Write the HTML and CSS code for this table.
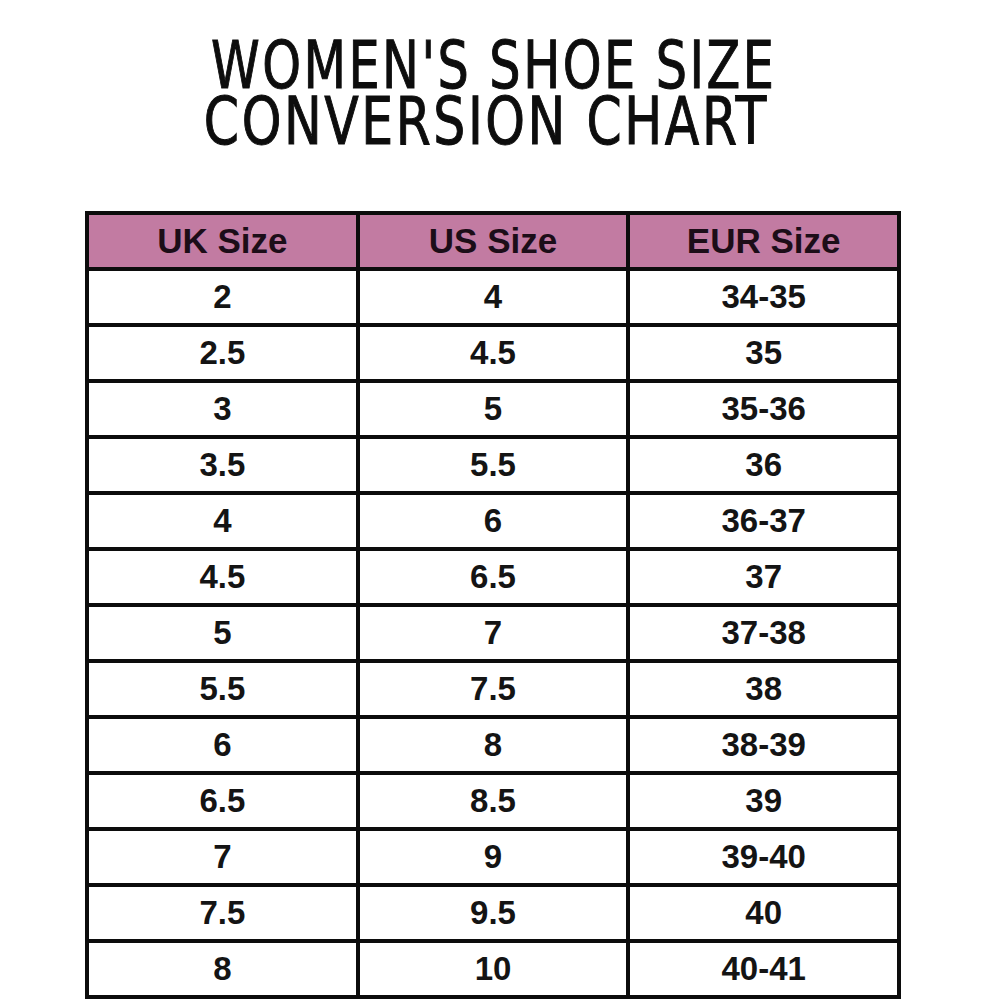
FILE: index.html
```html
<!DOCTYPE html>
<html>
<head>
<meta charset="utf-8">
<link rel="stylesheet" href="styles.css">
</head>
<body>
<div class="page">
  <h1 class="title"><span class="line">WOMEN'S SHOE SIZE</span><span class="line line2">CONVERSION CHART</span></h1>
  <table class="chart">
    <thead>
      <tr><th>UK Size</th><th>US Size</th><th>EUR Size</th></tr>
    </thead>
    <tbody>
      <tr><td>2</td><td>4</td><td>34-35</td></tr>
      <tr><td>2.5</td><td>4.5</td><td>35</td></tr>
      <tr><td>3</td><td>5</td><td>35-36</td></tr>
      <tr><td>3.5</td><td>5.5</td><td>36</td></tr>
      <tr><td>4</td><td>6</td><td>36-37</td></tr>
      <tr><td>4.5</td><td>6.5</td><td>37</td></tr>
      <tr><td>5</td><td>7</td><td>37-38</td></tr>
      <tr><td>5.5</td><td>7.5</td><td>38</td></tr>
      <tr><td>6</td><td>8</td><td>38-39</td></tr>
      <tr><td>6.5</td><td>8.5</td><td>39</td></tr>
      <tr><td>7</td><td>9</td><td>39-40</td></tr>
      <tr><td>7.5</td><td>9.5</td><td>40</td></tr>
      <tr><td>8</td><td>10</td><td>40-41</td></tr>
    </tbody>
  </table>
</div>
</body>
</html>
```
FILE: styles.css
```css
html, body {
  margin: 0;
  padding: 0;
  background: #fff;
}
.page {
  width: 1000px;
  height: 1000px;
  overflow: hidden;
}
.title {
  margin: 0;
  padding-top: 38px;
  display: flex;
  flex-direction: column;
  align-items: center;
  font-family: "DejaVu Sans Condensed", "DejaVu Sans", sans-serif;
  font-weight: normal;
  font-size: 66px;
  line-height: 56px;
  color: #0d0d0d;
  letter-spacing: 3px;
  -webkit-text-stroke: 1px #0d0d0d;
}
.line {
  display: block;
  height: 56px;
  transform: translateX(-6px) scaleX(0.83);
}
.line2 {
  transform: translateX(-14px) scaleX(0.85);
}
.chart {
  margin: 61px 0 0 85px;
  width: 816px;
  border-collapse: collapse;
  table-layout: fixed;
  font-family: "Liberation Sans", Arial, sans-serif;
  font-weight: bold;
}
.chart th, .chart td {
  border: 4px solid #0c0c0c;
  text-align: center;
  padding: 0;
  height: 52px;
}
.chart th {
  background: #c27ba2;
  color: #1c0d18;
  font-size: 35px;
}
.chart td {
  background: #fff;
  color: #141414;
  font-size: 33px;
}
```
